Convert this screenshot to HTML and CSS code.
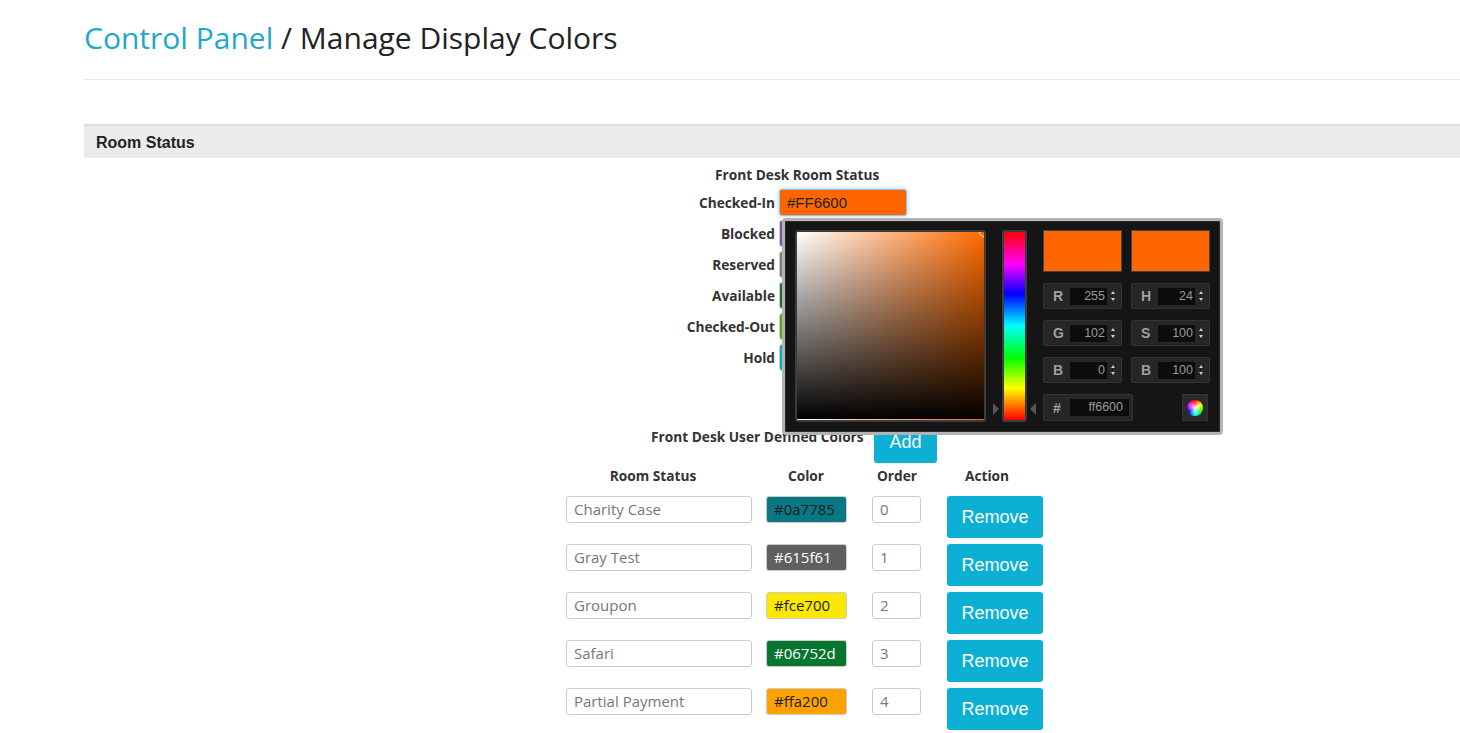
FILE: index.html
```html
<!DOCTYPE html>
<html>
<head>
<meta charset="utf-8">
<title>Manage Display Colors</title>
<link rel="stylesheet" href="styles.css">
</head>
<body>
<div class="page">
  <h1 class="title"><a class="crumb" href="#">Control Panel</a> / Manage Display Colors</h1>
  <hr class="rule">
  <section class="panel">
    <div class="panel-head">Room Status</div>
    <div class="panel-body">
      <div class="form-title">Front Desk Room Status</div>
      <div class="status-grid">
        <label class="status-label">Checked-In</label>
        <input class="swatch focused" style="background:#ff6600" value="#FF6600">
        <label class="status-label">Blocked</label>
        <input class="swatch" style="background:#7b52a6;color:#fff" value="#7B52A6">
        <label class="status-label">Reserved</label>
        <input class="swatch" style="background:#7d7d7d;color:#fff" value="#7D7D7D">
        <label class="status-label">Available</label>
        <input class="swatch" style="background:#226b2c;color:#fff" value="#226B2C">
        <label class="status-label">Checked-Out</label>
        <input class="swatch" style="background:#4db300" value="#4DB300">
        <label class="status-label">Hold</label>
        <input class="swatch" style="background:#00b0bf" value="#00B0BF">
      </div>

      <div class="user-def">
        <span class="user-def-label">Front Desk User Defined Colors</span>
        <button class="btn btn-add">Add</button>
      </div>

      <div class="ud-table">
        <div class="th">Room Status</div>
        <div class="th">Color</div>
        <div class="th">Order</div>
        <div class="th">Action</div>

        <div class="td c-name"><input class="field name" value="Charity Case"></div>
        <div class="td c-color"><input class="field color" style="background:#0a7785;color:#1d1d1d" value="#0a7785"></div>
        <div class="td c-order"><input class="field order" value="0"></div>
        <div class="td c-act"><button class="btn btn-remove">Remove</button></div>

        <div class="td c-name"><input class="field name" value="Gray Test"></div>
        <div class="td c-color"><input class="field color" style="background:#615f61;color:#fff" value="#615f61"></div>
        <div class="td c-order"><input class="field order" value="1"></div>
        <div class="td c-act"><button class="btn btn-remove">Remove</button></div>

        <div class="td c-name"><input class="field name" value="Groupon"></div>
        <div class="td c-color"><input class="field color" style="background:#fce700;color:#1d1d1d" value="#fce700"></div>
        <div class="td c-order"><input class="field order" value="2"></div>
        <div class="td c-act"><button class="btn btn-remove">Remove</button></div>

        <div class="td c-name"><input class="field name" value="Safari"></div>
        <div class="td c-color"><input class="field color" style="background:#06752d;color:#fff" value="#06752d"></div>
        <div class="td c-order"><input class="field order" value="3"></div>
        <div class="td c-act"><button class="btn btn-remove">Remove</button></div>

        <div class="td c-name"><input class="field name" value="Partial Payment"></div>
        <div class="td c-color"><input class="field color" style="background:#ffa200;color:#1d1d1d" value="#ffa200"></div>
        <div class="td c-order"><input class="field order" value="4"></div>
        <div class="td c-act"><button class="btn btn-remove">Remove</button></div>
      </div>

      <div class="picker">
        <div class="sv">
          <span class="sv-dot"></span>
          <span class="sv-line"></span>
        </div>
        <div class="hue">
          <span class="arrow arrow-r"></span>
          <span class="arrow arrow-l"></span>
        </div>
        <div class="pk-right">
          <div class="preview"></div>
          <div class="preview"></div>
          <div class="pf"><span class="pf-l">R</span><span class="pf-in">255</span><span class="spin"></span></div>
          <div class="pf"><span class="pf-l">H</span><span class="pf-in">24</span><span class="spin"></span></div>
          <div class="pf"><span class="pf-l">G</span><span class="pf-in">102</span><span class="spin"></span></div>
          <div class="pf"><span class="pf-l">S</span><span class="pf-in">100</span><span class="spin"></span></div>
          <div class="pf"><span class="pf-l">B</span><span class="pf-in">0</span><span class="spin"></span></div>
          <div class="pf"><span class="pf-l">B</span><span class="pf-in">100</span><span class="spin"></span></div>
          <div class="pk-last">
            <div class="pf pf-hex"><span class="pf-l">#</span><span class="pf-in hex">ff6600</span></div>
            <div class="wheel-btn"><span class="wheel"></span></div>
          </div>
        </div>
      </div>
    </div>
  </section>
</div>
</body>
</html>
```
FILE: styles.css
```css
html, body {
  margin: 0;
  padding: 0;
  background: #fff;
}
body {
  font-family: "Open Sans", "Liberation Sans", sans-serif;
  color: #333;
}
.page {
  padding-left: 84px;
}
.title {
  margin: 20px 0 0;
  font-size: 30px;
  line-height: 35px;
  font-weight: 400;
  color: #222;
}
.crumb {
  color: #1fa8ca;
  text-decoration: none;
}
.rule {
  border: 0;
  border-top: 1px solid #e8e8e8;
  margin: 24px 0 0;
  height: 0;
}
.panel {
  margin-top: 44px;
}
.panel-head {
  border-top: 2px solid #dcdcdc;
  background: #ebebeb;
  height: 32px;
  line-height: 33px;
  padding-left: 12px;
  font-family: "Liberation Sans", Arial, sans-serif;
  font-weight: 700;
  font-size: 16px;
  color: #222;
}
.panel-body {
  position: relative;
  padding-top: 8px;
  padding-bottom: 20px;
}
.form-title {
  padding-left: 631px;
  font-size: 13.7px;
  line-height: 18px;
  font-weight: 700;
}
.status-grid {
  display: grid;
  grid-template-columns: 200px 128px;
  column-gap: 4px;
  row-gap: 4px;
  grid-auto-rows: 27px;
  margin-left: 491px;
  margin-top: 5px;
}
.status-label {
  text-align: right;
  font-size: 13.7px;
  font-weight: 700;
  line-height: 27px;
}
.swatch {
  box-sizing: border-box;
  height: 27px;
  width: 128px;
  border: 1px solid #ccc;
  border-radius: 3px;
  padding: 0 7px;
  font-family: "Liberation Sans", Arial, sans-serif;
  font-size: 15px;
  color: #222;
  outline: none;
}
.swatch.focused {
  border-color: #8fc3ea;
  box-shadow: 0 0 5px rgba(102, 175, 233, 0.6);
}
.user-def {
  display: flex;
  align-items: flex-start;
  margin-top: 50px;
  margin-left: 567px;
  gap: 10px;
}
.user-def-label {
  font-size: 13.7px;
  line-height: 18px;
  font-weight: 700;
  padding-top: 7px;
  width: 213px;
}
.btn {
  border: 0;
  border-radius: 3px;
  background: #0bb0d4;
  color: #fff;
  font-family: "Liberation Sans", Arial, sans-serif;
  font-size: 18px;
  height: 42px;
  padding: 0;
  cursor: pointer;
}
.btn-add {
  width: 63px;
}
.btn-remove {
  width: 96px;
}
.ud-table {
  display: grid;
  grid-template-columns: 194px 112px 70px 110px;
  row-gap: 6px;
  margin-left: 472px;
  margin-top: 4px;
}
.th {
  text-align: center;
  font-size: 13.7px;
  line-height: 18px;
  font-weight: 700;
  margin-bottom: 5px;
}
.td {
  height: 42px;
}
.field {
  box-sizing: border-box;
  height: 27px;
  border: 1px solid #ccc;
  border-radius: 3px;
  padding: 0 7px 2px;
  font-family: "Open Sans", sans-serif;
  font-size: 15px;
  color: #777;
  background: #fff;
  outline: none;
}
.c-name { padding-left: 10px; }
.c-color { padding-left: 16px; }
.c-order { padding-left: 10px; }
.c-act { padding-left: 15px; }
.field.name { width: 186px; }
.field.color { width: 81px; }
.field.order { width: 49px; }

/* colour picker overlay */
.picker {
  position: absolute;
  left: 698px;
  top: 60px;
  z-index: 10;
  width: 441px;
  height: 217px;
  box-sizing: border-box;
  border: 3px solid #b3b3b3;
  border-radius: 4px;
  background: #151515;
  box-shadow: inset 0 0 0 1px #2c2c2c;
  padding: 9px 10px 0 10px;
  display: flex;
  gap: 16px;
  font-family: "Liberation Sans", Arial, sans-serif;
}
.sv {
  position: relative;
  width: 191px;
  height: 192px;
  box-sizing: border-box;
  border: 2px solid #3c3c3c;
  border-radius: 3px;
  background:
    linear-gradient(to bottom, rgba(0,0,0,0), #000),
    linear-gradient(to right, #fff, #ff6a00);
  overflow: hidden;
}
.sv-dot {
  position: absolute;
  right: -5px;
  top: -5px;
  width: 8px;
  height: 8px;
  border: 1.5px solid #fff;
  border-radius: 50%;
}
.sv-line {
  position: absolute;
  left: 0;
  right: 0;
  bottom: 0;
  height: 1px;
  background: linear-gradient(to right, #fff, #ff6600);
}
.hue {
  position: relative;
  width: 25px;
  height: 192px;
  box-sizing: border-box;
  border: 2px solid #3c3c3c;
  border-radius: 3px;
  background: linear-gradient(to bottom, #f00 0%, #f0f 17%, #00f 33%, #0ff 50%, #0f0 67%, #ff0 83%, #f00 100%);
}
.arrow {
  position: absolute;
  top: 171px;
  width: 0;
  height: 0;
  border-top: 6px solid transparent;
  border-bottom: 6px solid transparent;
}
.arrow-r {
  left: -11px;
  border-left: 6px solid #555;
}
.arrow-l {
  right: -11px;
  border-right: 6px solid #555;
}
.pk-right {
  display: grid;
  grid-template-columns: 79px 79px;
  grid-template-rows: 42px 26px 26px 26px 27px;
  column-gap: 9px;
  row-gap: 11px;
  width: 167px;
}
.preview {
  background: #ff6600;
  border: 1px solid #444;
  box-sizing: border-box;
}
.pf {
  display: flex;
  align-items: center;
  background: #262626;
  border: 1px solid #333;
  border-radius: 2px;
  box-sizing: border-box;
  padding-left: 9px;
}
.pf-l {
  width: 17px;
  color: #a0a0a0;
  font-weight: 700;
  font-size: 14px;
}
.pf-in {
  width: 37px;
  height: 17px;
  line-height: 17px;
  background: #0c0c0c;
  color: #9a9a9a;
  font-size: 12.5px;
  text-align: right;
  box-sizing: border-box;
  padding-right: 2px;
  overflow: hidden;
}
.spin {
  position: relative;
  width: 5px;
  height: 10px;
  margin-left: 4px;
}
.spin::before, .spin::after {
  content: "";
  position: absolute;
  left: 0;
  border-left: 2.5px solid transparent;
  border-right: 2.5px solid transparent;
}
.spin::before {
  top: 0;
  border-bottom: 3.5px solid #ccc;
}
.spin::after {
  bottom: 0;
  border-top: 3.5px solid #ccc;
}
.pk-last {
  grid-column: 1 / 3;
  display: flex;
  justify-content: space-between;
}
.pf-hex {
  width: 90px;
}
.pf-in.hex {
  width: 59px;
  padding-right: 6px;
}
.wheel-btn {
  width: 26px;
  height: 27px;
  box-sizing: border-box;
  background: #2a2a2a;
  border: 1px solid #333;
  margin-right: 2px;
  display: flex;
  align-items: center;
  justify-content: center;
}
.wheel {
  width: 16px;
  height: 16px;
  border-radius: 50%;
  background:
    radial-gradient(circle, rgba(255,255,255,0.95) 0%, rgba(255,255,255,0) 65%),
    conic-gradient(#f00, #ff0, #0f0, #0ff, #00f, #f0f, #f00);
}
```
